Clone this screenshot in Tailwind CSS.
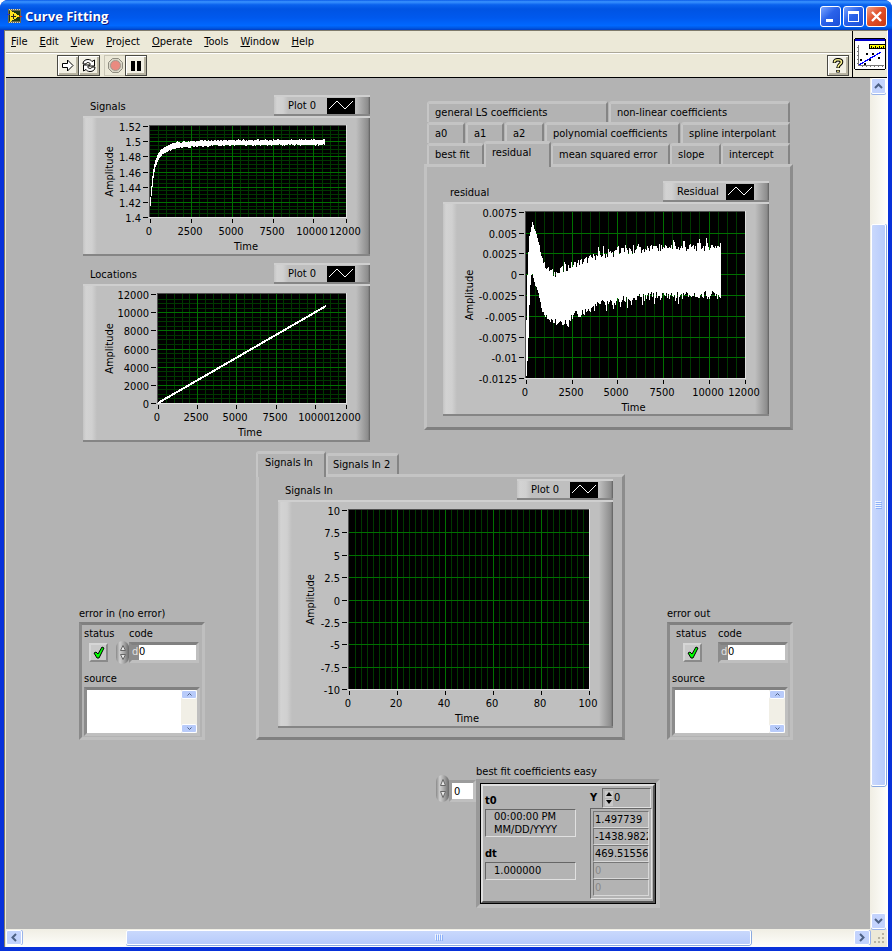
<!doctype html>
<html lang="en">
<head>
  <meta charset="UTF-8">
  <meta name="viewport" content="width=device-width, initial-scale=1.0">
  <script src="https://cdn.jsdelivr.net/npm/@tailwindcss/browser@4"></script>
  <title>Curve Fitting</title>
</head>
<body class="font-['DejaVu_Sans_Condensed','Noto_Sans',sans-serif] text-[11px] leading-[14px] text-black">
<div class="flex min-h-screen flex-col overflow-hidden rounded-t-lg bg-[#0831d9]">

  <!-- title bar -->
  <header class="flex h-[30px] items-center gap-[3px] bg-[linear-gradient(180deg,#0a5be8_0%,#3a93ff_6%,#0a62ee_16%,#0054e3_30%,#0059ee_60%,#0068ff_85%,#0056e0_94%,#003dc4_100%)] pt-0.5 pr-[5px] pl-[7px]">
    <svg width="15" height="14" viewBox="0 0 15 14" shape-rendering="crispEdges" class="shrink-0">
      <rect x="1" width="13" height="14" fill="#6b6950"/>
      <path d="M2 .5h11M2 13.500h11" stroke="#d8d4b8" stroke-dasharray="1 1"/>
      <rect x="2" y="2" width="11" height="10" fill="#1c3a14"/>
      <path d="M0 5.500h3" stroke="#2030e0"/>
      <path d="M12 7.500h3" stroke="#e02020"/>
      <path d="M3 1l10 6-10 6z" fill="#ffe620"/>
      <path d="M4 7.500h5M6.500 5v5" stroke="#222"/>
    </svg>
    <h1 class="flex-1 font-['Open_Sans',sans-serif] text-[13px] leading-4 font-bold text-white [text-shadow:1px_1px_0_#0a1883]">Curve Fitting</h1>
    <div class="flex gap-0.5">
      <button aria-label="Minimize" class="grid h-[21px] w-[21px] place-items-center rounded-[3px] border border-white bg-[linear-gradient(135deg,#7ba5ff,#2a62ea_45%,#1b4fd8)]">
        <svg width="13" height="13" viewBox="0 0 13 13"><path d="M2 10.500h7" stroke="#fff" stroke-width="3"/></svg>
      </button>
      <button aria-label="Maximize" class="grid h-[21px] w-[21px] place-items-center rounded-[3px] border border-white bg-[linear-gradient(135deg,#7ba5ff,#2a62ea_45%,#1b4fd8)]">
        <svg width="13" height="13" viewBox="0 0 13 13" shape-rendering="crispEdges"><path d="M1 1h11v11H1zM2 4v7h9V4z" fill="#fff" fill-rule="evenodd"/></svg>
      </button>
      <button aria-label="Close" class="grid h-[21px] w-[21px] place-items-center rounded-[3px] border border-white bg-[linear-gradient(135deg,#f0a088,#e0502a_45%,#c93a12)]">
        <svg width="13" height="13" viewBox="0 0 13 13"><path d="M2 2l9 9M11 2l-9 9" stroke="#fff" stroke-width="2.400"/></svg>
      </button>
    </div>
  </header>

  <div class="mr-1 mb-1 ml-1 flex flex-1 flex-col border-t border-r border-l border-t-[#7f7b6c] border-r-white border-l-[#7f7b6c] bg-[#ece9d8] pl-px">

    <!-- menu and toolbar -->
    <div class="flex border-b border-black">
      <div class="min-w-0 flex-1">
        <nav class="flex h-[22px] items-center gap-3 border-b border-[#aca899] pl-[5px]">
          <a href="#"><u>F</u>ile</a>
          <a href="#"><u>E</u>dit</a>
          <a href="#"><u>V</u>iew</a>
          <a href="#"><u>P</u>roject</a>
          <a href="#"><u>O</u>perate</a>
          <a href="#"><u>T</u>ools</a>
          <a href="#"><u>W</u>indow</a>
          <a href="#"><u>H</u>elp</a>
        </nav>
        <div class="flex h-6 items-center border-t border-white pr-[3px] pl-[51px]">
          <button aria-label="Run" class="grid h-[21px] w-[22px] place-items-center border border-[#4a4a44] bg-[#f2f0e4] shadow-[inset_1px_1px_0_#fff,inset_-2px_-2px_0_#b9b5a2]">
            <svg width="12" height="13" viewBox="0 0 12 13"><path d="M.5 4.500h5V1L11 6.500 5.500 12V8.500h-5z" fill="#fff" stroke="#000"/></svg>
          </button>
          <button aria-label="Run Continuously" class="-ml-px grid h-[21px] w-[22px] place-items-center border border-[#4a4a44] bg-[#f2f0e4] shadow-[inset_1px_1px_0_#fff,inset_-2px_-2px_0_#b9b5a2]">
            <svg width="16" height="15" viewBox="0 0 16 15" fill="#fff" stroke="#000"><path d="M2 6c0-3 2-4.500 5-4.500 2 0 3.500 1 4 2L13.500 2v6h-6l2-2C8 4 5.500 4 5 6z"/><path d="M14 9c0 3-2 4.500-5 4.500-2 0-3.500-1-4-2L2.500 13V7h6l-2 2C8 11 10.500 11 11 9z"/></svg>
          </button>
          <button aria-label="Abort" class="ml-1 grid h-[21px] w-[22px] place-items-center border border-[#c9c6b6]" disabled>
            <svg width="15" height="15" viewBox="0 0 15 15"><path d="M4.500.5h6l4 4v6l-4 4h-6l-4-4v-6z" fill="#d8d5c6" stroke="#8f8d80"/><circle cx="7.500" cy="7.500" r="5" fill="#e98a80" stroke="#a09a90"/></svg>
          </button>
          <button aria-label="Pause" class="-ml-px grid h-[21px] w-[22px] place-items-center border border-[#4a4a44] bg-[#f2f0e4] shadow-[inset_1px_1px_0_#fff,inset_-2px_-2px_0_#b9b5a2]">
            <svg width="10" height="10" viewBox="0 0 10 10"><path d="M0 0h4v10H0zM6 0h4v10H6z"/></svg>
          </button>
          <button aria-label="Context Help" class="ml-auto grid h-[21px] w-[22px] place-items-center border border-[#4a4a44] bg-[#f2f0e4] shadow-[inset_1px_1px_0_#fff,inset_-2px_-2px_0_#b9b5a2]">
            <svg width="12" height="16" viewBox="0 0 12 16" fill="none" stroke-linejoin="round"><path d="M2.500 5V4c0-3 7-3 7 0 0 2.500-3.500 2.500-3.500 6M6 12v2.500" stroke="#000" stroke-width="3.600"/><path d="M2.500 4.600V4c0-3 7-3 7 0 0 2.500-3.500 2.500-3.500 5.600M6 12.500v1.500" stroke="#f7f08a" stroke-width="1.600"/></svg>
          </button>
        </div>
      </div>
      <div class="w-[35px] shrink-0 border-l border-black pt-[7px] pl-px">
        <svg width="32" height="32" viewBox="0 0 32 32" shape-rendering="crispEdges">
          <rect x=".5" y=".5" width="31" height="31" rx="2" fill="#fff" stroke="#000"/>
          <path d="M1 2h30" stroke="#0000d0" stroke-width="2"/>
          <path d="M4.500 7v20.500H30" fill="none" stroke="#777"/>
          <path d="M3 9.500h2M3 13.500h2M3 17.500h2M3 21.500h2M3 25.500h2M8.500 27v2M12.500 27v2M16.500 27v2M20.500 27v2M24.500 27v2M28.500 27v2" stroke="#777"/>
          <path d="M5 27L27 14" stroke="#0000ff" stroke-width="1.200"/>
          <rect x="15.500" y="6.500" width="16" height="4" fill="#ff0" stroke="#000"/>
          <path d="M17.500 8v2M19.500 9v1M21.500 8v2M23.500 9v1M25.500 8v2M27.500 9v1M29.500 8v2" stroke="#000"/>
          <path d="M6 21l2 2m0-2l-2 2M10 25l2 2m0-2l-2 2M12 15l2 2m0-2l-2 2M18 15l2 2m0-2l-2 2M15 21l2 2m0-2l-2 2M24 19l2 2m0-2l-2 2" stroke="#000"/>
        </svg>
      </div>
    </div>

    <div class="flex flex-1">
      <!-- front panel -->
      <main class="min-w-0 flex-1 overflow-hidden bg-[#b3b3b3] pt-[17px] pl-[73px]">
        <div class="w-[714px]">

          <div class="flex items-start justify-between pl-1">
            <div class="flex w-[287px] flex-col gap-[7px]">
              <section>
                <div class="flex h-[21px] items-center justify-between pl-[7px]">
                  <h2 class="pt-[3px]">Signals</h2>
                  <div class="flex h-[21px] w-24 items-center justify-between border-t-2 border-b-2 border-t-[#cfcfcf] border-b-[#858585] bg-[linear-gradient(90deg,#c4c4c4_0,#d3d3d3_3px,#d0d0d0_9px,#bfbfbf_14px,#bfbfbf_calc(100%-14px),#8c8c8c_calc(100%-2px),#5f5f5f_100%)] pr-[15px] pl-3.5">
                    <span>Plot 0</span>
                    <svg width="28" height="16" viewBox="0 0 28 16" class="bg-black"><path d="M2 11l8-8 8 8 8-8" fill="none" stroke="#fff"/></svg>
                  </div>
                </div>
                <div id="signals" class="border-t-2 border-b-2 border-t-[#cfcfcf] border-b-[#858585] bg-[linear-gradient(90deg,#c4c4c4_0,#d3d3d3_3px,#d0d0d0_9px,#bfbfbf_14px,#bfbfbf_calc(100%-14px),#8c8c8c_calc(100%-2px),#5f5f5f_100%)]"></div>
              </section>
              <section>
                <div class="flex h-[21px] items-center justify-between pl-[7px]">
                  <h2 class="pt-[3px]">Locations</h2>
                  <div class="flex h-[21px] w-24 items-center justify-between border-t-2 border-b-2 border-t-[#cfcfcf] border-b-[#858585] bg-[linear-gradient(90deg,#c4c4c4_0,#d3d3d3_3px,#d0d0d0_9px,#bfbfbf_14px,#bfbfbf_calc(100%-14px),#8c8c8c_calc(100%-2px),#5f5f5f_100%)] pr-[15px] pl-3.5">
                    <span>Plot 0</span>
                    <svg width="28" height="16" viewBox="0 0 28 16" class="bg-black"><path d="M2 11l8-8 8 8 8-8" fill="none" stroke="#fff"/></svg>
                  </div>
                </div>
                <div id="locations" class="border-t-2 border-b-2 border-t-[#cfcfcf] border-b-[#858585] bg-[linear-gradient(90deg,#c4c4c4_0,#d3d3d3_3px,#d0d0d0_9px,#bfbfbf_14px,#bfbfbf_calc(100%-14px),#8c8c8c_calc(100%-2px),#5f5f5f_100%)]"></div>
              </section>
            </div>

            <!-- results tabs -->
            <div class="w-[369px] pt-1.5">
              <div class="px-[3px] text-left [&_button]:h-[21px] [&_button]:rounded-t-[3px] [&_button]:border-t-[3px] [&_button]:border-r-2 [&_button]:border-l-2 [&_button]:border-t-[#c4c4c4] [&_button]:border-r-[#858585] [&_button]:border-l-[#c6c6c6] [&_button]:bg-[#b3b3b3] [&_button]:pl-1.5 [&_button]:text-left [&_button]:whitespace-nowrap">
                <div class="flex h-[21px] gap-px">
                  <button class="w-[181px]">general LS coefficients</button>
                  <button class="flex-1">non-linear coefficients</button>
                </div>
                <div class="flex h-[21px] gap-px">
                  <button class="w-[38px]">a0</button>
                  <button class="w-[38px]">a1</button>
                  <button class="w-[39px]">a2</button>
                  <button class="w-[135px]">polynomial coefficients</button>
                  <button class="flex-1">spline interpolant</button>
                </div>
                <div class="flex h-[21px]">
                  <button class="w-[57px]">best fit</button>
                  <button class="relative z-10 -mt-0.5 w-[67px] shrink-0 pb-1.5 !h-[26px]">residual</button>
                  <button class="w-[119px]">mean squared error</button>
                  <button class="w-[51px]">slope</button>
                  <button class="flex-1">intercept</button>
                </div>
              </div>
              <div class="border-[3px] border-t-[#c4c4c4] border-r-[#8c8c8c] border-b-[#808080] border-l-[#c2c2c2] pt-3.5 pr-[21px] pb-[11px] pl-4">
                <div class="flex h-[21px] items-center justify-between pl-[7px]">
                  <h2 class="pt-[3px]">residual</h2>
                  <div class="flex h-[21px] w-[106px] items-center justify-between border-t-2 border-b-2 border-t-[#cfcfcf] border-b-[#858585] bg-[linear-gradient(90deg,#c4c4c4_0,#d3d3d3_3px,#d0d0d0_9px,#bfbfbf_14px,#bfbfbf_calc(100%-14px),#8c8c8c_calc(100%-2px),#5f5f5f_100%)] pr-[15px] pl-3.5">
                    <span>Residual</span>
                    <svg width="28" height="16" viewBox="0 0 28 16" class="bg-black"><path d="M2 11l8-8 8 8 8-8" fill="none" stroke="#fff"/></svg>
                  </div>
                </div>
                <div id="residual" class="border-t-2 border-b-2 border-t-[#cfcfcf] border-b-[#858585] bg-[linear-gradient(90deg,#c4c4c4_0,#d3d3d3_3px,#d0d0d0_9px,#bfbfbf_14px,#bfbfbf_calc(100%-14px),#8c8c8c_calc(100%-2px),#5f5f5f_100%)]"></div>
              </div>
            </div>
          </div>

          <div class="mt-[9px] flex items-end">
            <!-- error in -->
            <section class="w-[126px]">
              <h2 class="pb-px">error in (no error)</h2>
              <div class="border-[3px] border-t-[#808080] border-r-[#bfbfbf] border-b-[#bfbfbf] border-l-[#8a8a8a] px-0.5 pt-[3px] pb-px">
                <div class="flex justify-between leading-3">
                  <label for="status-in">status</label>
                  <label for="code-in" class="w-[71px]">code</label>
                </div>
                <div class="flex h-[23px] items-center pt-px pl-[5px]">
                  <div class="grid place-items-center">
                    <input id="status-in" type="checkbox" checked class="col-start-1 row-start-1 h-[19px] w-[19px] appearance-none border-2 border-t-[#d6d6d6] border-r-[#8a8a8a] border-b-[#8a8a8a] border-l-[#d6d6d6] bg-[#c9c9c9]">
                    <svg width="12" height="13" viewBox="0 0 12 13" class="pointer-events-none col-start-1 row-start-1"><path d="M1 7l2-1 2 2 4-7 2 1-5 10H4z" fill="#0f0" stroke="#000"/></svg>
                  </div>
                  <div class="ml-2 flex h-[23px] w-[13px] flex-col items-center justify-between rounded-full bg-[linear-gradient(90deg,#8a8a8a,#cfcfcf_30%,#a8a8a8_60%,#6a6a6a)] py-1">
                    <button aria-label="Increment code"><svg width="6" height="6" viewBox="0 0 6 6" class="block"><path d="M.5 5.500L3 .5l2.500 5z" fill="#e8e8e8" stroke="#666"/></svg></button>
                    <button aria-label="Decrement code"><svg width="6" height="6" viewBox="0 0 6 6" class="block"><path d="M.5.5L3 5.500 5.500.5z" fill="#e8e8e8" stroke="#666"/></svg></button>
                  </div>
                  <div class="flex h-[21px] w-[70px] border-[3px] border-t-[#808080] border-r-[#bfbfbf] border-b-[#bfbfbf] border-l-[#8c8c8c] bg-[#8c8c8c]">
                    <span class="w-[7px] text-[#e0e0e0]">d</span>
                    <input id="code-in" type="text" value="0" class="min-w-0 flex-1 bg-white outline-none">
                  </div>
                </div>
                <label for="source-in" class="mt-[9px] mb-px block">source</label>
                <div class="flex h-[49px] border-[3px] border-t-[#808080] border-r-[#bfbfbf] border-b-[#bfbfbf] border-l-[#8c8c8c] bg-white">
                  <textarea id="source-in" class="min-w-0 flex-1 resize-none outline-none"></textarea>
                  <div class="flex w-4 flex-col justify-between bg-[#f1efe6]">
                    <button aria-label="Scroll up" class="grid h-[9px] place-items-center rounded-xs border border-white bg-[#b8cbfa]"><svg width="5" height="3" viewBox="0 0 5 3"><path d="M.5 2.500l2-2 2 2" fill="none" stroke="#4d6185"/></svg></button>
                    <button aria-label="Scroll down" class="grid h-[9px] place-items-center rounded-xs border border-white bg-[#b8cbfa]"><svg width="5" height="3" viewBox="0 0 5 3"><path d="M.5.5l2 2 2-2" fill="none" stroke="#4d6185"/></svg></button>
                  </div>
                </div>
              </div>
            </section>

            <!-- input signals tabs -->
            <div class="ml-[51px] w-[369px]">
              <div class="flex h-[23px] [&_button]:rounded-t-[3px] [&_button]:border-t-[3px] [&_button]:border-r-2 [&_button]:border-l-2 [&_button]:border-t-[#c4c4c4] [&_button]:border-r-[#858585] [&_button]:border-l-[#c6c6c6] [&_button]:bg-[#b3b3b3] [&_button]:text-left">
                <button class="relative z-10 h-[26px] w-[70px] pb-1.5 pl-[7px]">Signals In</button>
                <button class="mt-0.5 h-[21px] w-[73px] pl-[5px]">Signals In 2</button>
              </div>
              <div class="border-[3px] border-t-[#c4c4c4] border-r-[#8c8c8c] border-b-[#808080] border-l-[#c2c2c2] pt-0.5 pr-[9px] pb-[9px] pl-[19px]">
                <div class="flex h-[21px] items-center justify-between pl-[7px]">
                  <h2 class="pt-[3px]">Signals In</h2>
                  <div class="flex h-[21px] w-24 items-center justify-between border-t-2 border-b-2 border-t-[#cfcfcf] border-b-[#858585] bg-[linear-gradient(90deg,#c4c4c4_0,#d3d3d3_3px,#d0d0d0_9px,#bfbfbf_14px,#bfbfbf_calc(100%-14px),#8c8c8c_calc(100%-2px),#5f5f5f_100%)] pr-[15px] pl-3.5">
                    <span>Plot 0</span>
                    <svg width="28" height="16" viewBox="0 0 28 16" class="bg-black"><path d="M2 11l8-8 8 8 8-8" fill="none" stroke="#fff"/></svg>
                  </div>
                </div>
                <div id="signalsIn" class="border-t-2 border-b-2 border-t-[#cfcfcf] border-b-[#858585] bg-[linear-gradient(90deg,#c4c4c4_0,#d3d3d3_3px,#d0d0d0_9px,#bfbfbf_14px,#bfbfbf_calc(100%-14px),#8c8c8c_calc(100%-2px),#5f5f5f_100%)]"></div>
              </div>
            </div>

            <!-- error out -->
            <section class="ml-[42px] w-[126px]">
              <h2 class="pb-px">error out</h2>
              <div class="border-[3px] border-t-[#808080] border-r-[#bfbfbf] border-b-[#bfbfbf] border-l-[#8a8a8a] px-0.5 pt-[3px] pb-px">
                <div class="flex justify-between pl-1 leading-3">
                  <label for="status-out">status</label>
                  <label for="code-out" class="w-[70px]">code</label>
                </div>
                <div class="flex h-[23px] items-center justify-between pt-px pl-[11px]">
                  <div class="grid place-items-center">
                    <input id="status-out" type="checkbox" checked class="col-start-1 row-start-1 h-[19px] w-[19px] appearance-none border-2 border-t-[#d6d6d6] border-r-[#8a8a8a] border-b-[#8a8a8a] border-l-[#d6d6d6] bg-[#c9c9c9]">
                    <svg width="12" height="13" viewBox="0 0 12 13" class="pointer-events-none col-start-1 row-start-1"><path d="M1 7l2-1 2 2 4-7 2 1-5 10H4z" fill="#0f0" stroke="#000"/></svg>
                  </div>
                  <div class="flex h-[21px] w-[70px] border-[3px] border-t-[#808080] border-r-[#bfbfbf] border-b-[#bfbfbf] border-l-[#8c8c8c] bg-[#8c8c8c]">
                    <span class="w-[7px] text-[#e0e0e0]">d</span>
                    <input id="code-out" type="text" value="0" readonly class="min-w-0 flex-1 bg-white outline-none">
                  </div>
                </div>
                <label for="source-out" class="mt-[9px] mb-px block">source</label>
                <div class="flex h-[49px] border-[3px] border-t-[#808080] border-r-[#bfbfbf] border-b-[#bfbfbf] border-l-[#8c8c8c] bg-white">
                  <textarea id="source-out" readonly class="min-w-0 flex-1 resize-none outline-none"></textarea>
                  <div class="flex w-4 flex-col justify-between bg-[#f1efe6]">
                    <button aria-label="Scroll up" class="grid h-[9px] place-items-center rounded-xs border border-white bg-[#b8cbfa]"><svg width="5" height="3" viewBox="0 0 5 3"><path d="M.5 2.500l2-2 2 2" fill="none" stroke="#4d6185"/></svg></button>
                    <button aria-label="Scroll down" class="grid h-[9px] place-items-center rounded-xs border border-white bg-[#b8cbfa]"><svg width="5" height="3" viewBox="0 0 5 3"><path d="M.5.5l2 2 2-2" fill="none" stroke="#4d6185"/></svg></button>
                  </div>
                </div>
              </div>
            </section>
          </div>

          <!-- best fit waveform array -->
          <section class="mt-[25px] pl-[357px]">
            <h2 class="pl-10">best fit coefficients easy</h2>
            <div class="flex items-start">
              <div class="-mt-1 flex h-[27px] w-[13px] flex-col items-center justify-between rounded-full bg-[linear-gradient(90deg,#8a8a8a,#cfcfcf_30%,#a8a8a8_60%,#6a6a6a)] py-1">
                <button aria-label="Next element"><svg width="6" height="7" viewBox="0 0 6 7" class="block"><path d="M.5 6.500L3 .5l2.500 6z" fill="#e8e8e8" stroke="#666"/></svg></button>
                <button aria-label="Previous element"><svg width="6" height="7" viewBox="0 0 6 7" class="block"><path d="M.5.5L3 6.500 5.500.5z" fill="#e8e8e8" stroke="#666"/></svg></button>
              </div>
              <input type="text" value="0" aria-label="Element index" class="mt-px h-[22px] w-[27px] border-[3px] border-t-[#9c9c9c] border-r-[#bfbfbf] border-b-[#bfbfbf] border-l-[#9c9c9c] bg-white pl-0.5 outline-none">
              <div class="w-[184px] border-4 border-t-[#999] border-r-[#bfbfbf] border-b-[#bfbfbf] border-l-[#999]">
                <div class="border border-black">
                  <div class="flex justify-between border-2 border-t-[#e0e0e0] border-r-[#555] border-b-[#555] border-l-[#e0e0e0] pt-0.5 pr-px pb-0.5 pl-0.5">
                    <div class="w-[91px] pt-1.5">
                      <h3 class="h-[15px] font-bold">t0</h3>
                      <div class="border border-t-[#666] border-r-[#e0e0e0] border-b-[#e0e0e0] border-l-[#666] pl-2 leading-[13px]">00:00:00 PM<br>MM/DD/YYYY</div>
                      <h3 class="mt-2.5 h-[15px] font-bold">dt</h3>
                      <div class="h-[18px] border border-t-[#666] border-r-[#e0e0e0] border-b-[#e0e0e0] border-l-[#666] pl-2 leading-4">1.000000</div>
                    </div>
                    <div class="w-[62px]">
                      <div class="flex items-center justify-between pr-px">
                        <label for="y-index" class="font-bold">Y</label>
                        <div class="flex h-5 w-[49px] items-center border border-t-[#666] border-r-[#e0e0e0] border-b-[#e0e0e0] border-l-[#666] pl-0.5">
                          <div class="flex w-2 flex-col gap-px">
                            <button aria-label="Next Y" class="grid h-[7px] place-items-center bg-[#c8c8c8]"><svg width="6" height="4" viewBox="0 0 6 4"><path d="M3 0l3 4H0z"/></svg></button>
                            <button aria-label="Previous Y" class="grid h-[7px] place-items-center bg-[#c8c8c8]"><svg width="6" height="4" viewBox="0 0 6 4"><path d="M3 4l3-4H0z"/></svg></button>
                          </div>
                          <input id="y-index" type="text" value="0" class="min-w-0 flex-1 pl-px outline-none">
                        </div>
                      </div>
                      <ul class="border border-t-[#666] border-r-[#e0e0e0] border-b-[#e0e0e0] border-l-[#666] p-0.5 [&_li]:h-[17px] [&_li]:overflow-hidden [&_li]:border [&_li]:border-t-[#777] [&_li]:border-r-[#d8d8d8] [&_li]:border-b-[#d8d8d8] [&_li]:border-l-[#777] [&_li]:pl-px [&_li]:leading-4">
                        <li>1.497739</li>
                        <li>-1438.9822</li>
                        <li>469.51556</li>
                        <li class="text-[#888]">0</li>
                        <li class="text-[#888]">0</li>
                      </ul>
                    </div>
                  </div>
                </div>
              </div>
            </div>
          </section>
        </div>
      </main>

      <!-- vertical scroll bar -->
      <div class="flex w-[17px] shrink-0 flex-col bg-[linear-gradient(90deg,#f0eee4,#fefefb)] px-px">
        <button aria-label="Scroll up" class="grid h-4 place-items-center rounded-xs border border-white bg-[#c3d3fd] shadow-[0_1px_0_#9ab4ea]"><svg width="9" height="6" viewBox="0 0 9 6"><path d="M1 5l3.500-3.500L8 5" fill="none" stroke="#4d6185" stroke-width="2"/></svg></button>
        <div class="grow-[130] basis-0"></div>
        <div class="grid grow-[563] basis-0 place-items-center rounded-xs border border-white bg-[linear-gradient(90deg,#c9d8fc,#b7cbfb)] shadow-[0_1px_0_#8aa9e0,1px_0_0_#8aa9e0]"><svg width="7" height="8" viewBox="0 0 7 8" shape-rendering="crispEdges"><path d="M0 .5h6M0 2.500h6M0 4.500h6M0 6.500h6" stroke="#eef4fe"/><path d="M1 1.500h6M1 3.500h6M1 5.500h6M1 7.500h6" stroke="#8cb0f8"/></svg></div>
        <div class="grow-[127] basis-0"></div>
        <button aria-label="Scroll down" class="grid h-4 place-items-center rounded-xs border border-white bg-[#c3d3fd] shadow-[0_1px_0_#9ab4ea]"><svg width="9" height="6" viewBox="0 0 9 6"><path d="M1 1l3.500 3.500L8 1" fill="none" stroke="#4d6185" stroke-width="2"/></svg></button>
      </div>
    </div>

    <!-- horizontal scroll bar -->
    <div class="flex h-[18px]">
      <div class="flex min-w-0 flex-1 bg-[linear-gradient(180deg,#f0eee4,#fefefb)] pt-px pb-0.5">
        <button aria-label="Scroll left" class="grid w-4 place-items-center rounded-xs border border-white bg-[#c3d3fd] shadow-[1px_0_0_#9ab4ea]"><svg width="6" height="9" viewBox="0 0 6 9"><path d="M5 1L1.500 4.500 5 8" fill="none" stroke="#4d6185" stroke-width="2"/></svg></button>
        <div class="grow-[104] basis-0"></div>
        <div class="grid grow-[626] basis-0 place-items-center rounded-xs border border-white bg-[linear-gradient(180deg,#c9d8fc,#b7cbfb)] shadow-[0_1px_0_#8aa9e0,1px_0_0_#8aa9e0]"><svg width="8" height="7" viewBox="0 0 8 7" shape-rendering="crispEdges"><path d="M.5 0v6M2.500 0v6M4.500 0v6M6.500 0v6" stroke="#eef4fe"/><path d="M1.500 1v6M3.500 1v6M5.500 1v6M7.500 1v6" stroke="#8cb0f8"/></svg></div>
        <div class="grow-[103] basis-0"></div>
        <button aria-label="Scroll right" class="grid w-4 place-items-center rounded-xs border border-white bg-[#c3d3fd] shadow-[1px_0_0_#9ab4ea]"><svg width="6" height="9" viewBox="0 0 6 9"><path d="M1 1l3.500 3.500L1 8" fill="none" stroke="#4d6185" stroke-width="2"/></svg></button>
      </div>
      <svg width="17" height="17" viewBox="0 0 17 17" class="shrink-0"><path d="M12 4h2v2h-2zM8 8h2v2H8zM12 8h2v2h-2zM4 12h2v2H4zM8 12h2v2H8zM12 12h2v2h-2z" fill="#b8b4a2"/></svg>
    </div>
  </div>
</div>

<script>
  // repeatable noise in -0.5..0.5
  const noise = (i) => {
    const n = Math.sin(i * 12.9898) * 43758.5453;
    return n - Math.floor(n) - 0.5;
  };

  const lerp = (points, t) => {
    for (let i = 1; i < points.length; i++) {
      const [t0, v0] = points[i - 1];
      const [t1, v1] = points[i];
      if (t <= t1) return v0 + (v1 - v0) * (t - t0) / (t1 - t0);
    }
    return points[points.length - 1][1];
  };

  const drawChart = (id, c) => {
    const [x0, y0, w, h] = c.plot;
    const px = (v) => Math.round(x0 + v / c.xMax * w);
    const py = (v) => Math.round(y0 + (c.yMax - v) / (c.yMax - c.yMin) * h);
    let minor = '';
    let major = '';
    let out = '';

    for (let v = c.xMinor; v < c.xMax; v += c.xMinor) minor += `M${px(v) + 0.5} ${y0}v${h}`;
    if (c.yMinor) {
      for (let v = c.yMin + c.yMinor; v < c.yMax - c.yMinor / 2; v += c.yMinor) minor += `M${x0} ${py(v) + 0.5}h${w}`;
    }
    c.xTicks.forEach((v) => {
      if (v > 0 && v < c.xMax) major += `M${px(v) + 0.5} ${y0}v${h}`;
      out += `<path d="M${px(v) + 0.5} ${y0 + h + 2}v4" stroke="#000"/>`;
      out += `<text x="${px(v) - 1}" y="${y0 + h + 18}" text-anchor="middle">${v}</text>`;
    });
    c.yTicks.forEach((v) => {
      if (v > c.yMin && v < c.yMax) major += `M${x0} ${py(v) + 0.5}h${w}`;
      out += `<path d="M${x0 - 7} ${py(v) + 0.5}h5" stroke="#000"/>`;
      out += `<text x="${x0 - 9}" y="${py(v) + 5}" text-anchor="end">${v}</text>`;
    });

    if (c.upper) {
      let bars = '';
      for (let x = x0; x < px(10700); x++) {
        const t = (x - x0) / w * c.xMax;
        const jitter = c.jitter * Math.min(1, t / 1500);
        const spike = t > 1500 ? c.jitter * 0.6 : 0;
        const top = py(lerp(c.upper, t) + noise(x) * jitter + (noise(x * 7) > 0.34 ? spike : 0));
        const bottom = py(lerp(c.lower, t) + noise(x + 500) * jitter - (noise(x * 3) > 0.36 ? spike : 0));
        bars += `M${x + 0.5} ${top}V${Math.max(bottom, top + 2)}`;
      }
      out += `<path d="${bars}" stroke="#fff"/>`;
    }
    if (c.line) {
      out += `<path d="M${px(0)} ${py(0)}L${px(10700)} ${py(10700)}" stroke="#fff" stroke-width="2"/>`;
    }

    const midX = x0 + w / 2;
    const midY = y0 + h / 2;
    document.getElementById(id).innerHTML = `
      <svg class="block" width="${c.size[0]}" height="${c.size[1]}" shape-rendering="crispEdges">
        <rect x="${x0 - 1}" y="${y0 - 1}" width="${w + 2}" height="${h + 2}" fill="#e0e0e0"/>
        <rect x="${x0 - 1}" y="${y0 - 1}" width="${w + 1}" height="${h + 1}" fill="#505050"/>
        <rect x="${x0}" y="${y0}" width="${w}" height="${h}"/>
        <path d="${minor}" stroke="#003800"/>
        <path d="${major}" stroke="#007000"/>
        ${out}
        <text x="${midX - 2}" y="${y0 + h + 33}" text-anchor="middle">Time</text>
        <text transform="translate(${c.yLabelX} ${midY}) rotate(-90)" text-anchor="middle">Amplitude</text>
      </svg>
    `;
  };

  drawChart('signals', {
    size: [287, 136], plot: [67, 8, 196, 91], yLabelX: 30, jitter: 0.0016,
    xMax: 12000, xMinor: 500, xTicks: [0, 2500, 5000, 7500, 10000, 12000],
    yMin: 1.4, yMax: 1.52, yMinor: 0.005, yTicks: [1.52, 1.5, 1.48, 1.46, 1.44, 1.42, 1.4],
    upper: [[0, 1.427], [100, 1.45], [200, 1.466], [300, 1.475], [500, 1.485], [700, 1.49], [1000, 1.494], [1500, 1.498], [2500, 1.5], [4000, 1.501], [10700, 1.5018]],
    lower: [[0, 1.415], [100, 1.435], [200, 1.454], [300, 1.465], [500, 1.476], [700, 1.482], [1000, 1.486], [1500, 1.490], [2500, 1.493], [4000, 1.4944], [10700, 1.4952]]
  });

  drawChart('locations', {
    size: [287, 154], plot: [75, 8, 188, 109], yLabelX: 30, line: true,
    xMax: 12000, xMinor: 500, xTicks: [0, 2500, 5000, 7500, 10000, 12000],
    yMin: 0, yMax: 12000, yMinor: 500, yTicks: [12000, 10000, 8000, 6000, 4000, 2000, 0]
  });

  drawChart('residual', {
    size: [326, 210], plot: [83, 8, 219, 166], yLabelX: 30, jitter: 0.001,
    xMax: 12000, xMinor: 500, xTicks: [0, 2500, 5000, 7500, 10000, 12000],
    yMin: -0.0125, yMax: 0.0075, yTicks: [0.0075, 0.005, 0.0025, 0, -0.0025, -0.005, -0.0075, -0.01, -0.0125],
    upper: [[0, -0.0055], [60, 0.0005], [150, 0.0045], [330, 0.0062], [480, 0.0053], [750, 0.003], [970, 0.0012], [1200, 0.0006], [1500, 0.0001], [1800, 0.0002], [2200, 0.0008], [2600, 0.0012], [3300, 0.0017], [4000, 0.0023], [5100, 0.0027], [7000, 0.0031], [10700, 0.0034]],
    lower: [[0, -0.0123], [90, -0.0093], [150, -0.0044], [240, -0.0003], [310, 0], [480, -0.0012], [660, -0.0025], [840, -0.0042], [1000, -0.005], [1300, -0.0055], [1750, -0.0058], [2200, -0.0055], [2760, -0.0049], [3300, -0.0044], [4000, -0.0036], [5100, -0.0032], [7000, -0.0026], [10700, -0.0025]]
  });

  drawChart('signalsIn', {
    size: [335, 224], plot: [71, 8, 240, 179], yLabelX: 36,
    xMax: 100, xMinor: 2.5, xTicks: [0, 20, 40, 60, 80, 100],
    yMin: -10, yMax: 10, yTicks: [10, 7.5, 5, 2.5, 0, -2.5, -5, -7.5, -10]
  });
</script>
</body>
</html>
